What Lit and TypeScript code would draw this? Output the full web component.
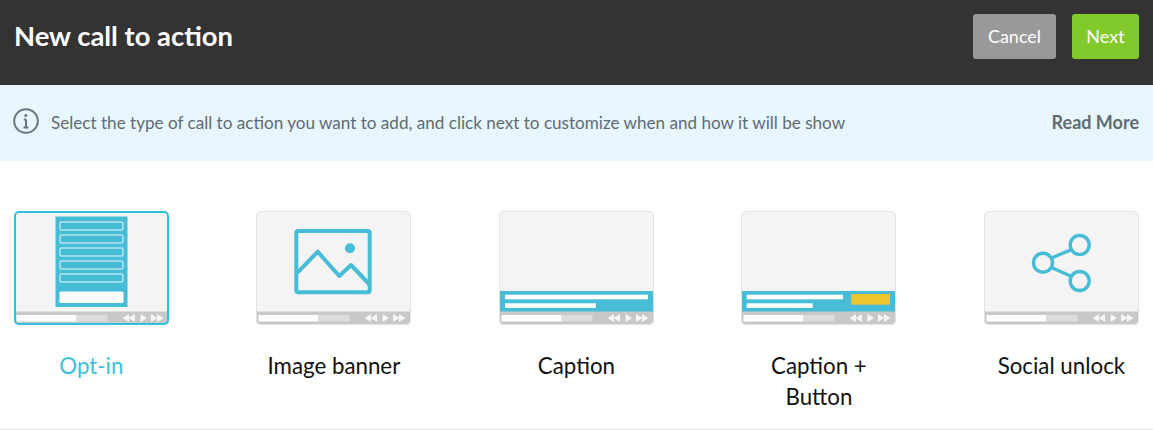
import { LitElement, html, css, svg } from 'lit';
import { customElement } from 'lit/decorators.js';
import { classMap } from 'lit/directives/class-map.js';

const BLUE = '#47bcd6';

const optinArt = svg`
  <rect x="41.5" y="5.5" width="72" height="90.5" fill="${BLUE}" />
  ${[11, 24, 37, 50, 63].map(
    (y) => svg`<rect x="46" y="${y}" width="63" height="8" rx="1.5" fill="none" stroke="#b5e5ef" stroke-width="1.5" />`
  )}
  <rect x="45.5" y="80.5" width="64" height="11.5" rx="1.5" fill="#fff" />
`;

const imageArt = svg`
  <g fill="none" stroke="${BLUE}" stroke-width="4" stroke-linejoin="round">
    <rect x="40.3" y="20" width="73.4" height="61.3" rx="2" />
    <path d="M41.5 61.7 61.7 40.7 83.3 65 95 54 114 74" />
  </g>
  <circle cx="94" cy="37.3" r="5" fill="${BLUE}" />
`;

const captionArt = svg`
  <rect x="0" y="80" width="155" height="21" fill="${BLUE}" />
  <rect x="6" y="83.7" width="143" height="4.6" fill="#fff" />
  <rect x="6" y="92.3" width="91" height="4.6" fill="#fff" />
`;

const captionButtonArt = svg`
  <rect x="0" y="80" width="155" height="21" fill="${BLUE}" />
  <rect x="5.7" y="83.7" width="96.3" height="4.6" fill="#fff" />
  <rect x="5.7" y="92.3" width="66" height="4.6" fill="#fff" />
  <rect x="110.3" y="83" width="38.7" height="10.7" fill="#efc42d" />
`;

const socialArt = svg`
  <g fill="none" stroke="${BLUE}" stroke-width="3.4">
    <path d="M67.5 47 87.5 38.5M67.5 56.5 87.5 65.5" />
    <circle cx="95.7" cy="34" r="9.5" />
    <circle cx="59" cy="51.7" r="9.5" />
    <circle cx="95.7" cy="70" r="9.5" />
  </g>
`;

const controls = svg`
  <rect x="0" y="100.5" width="155" height="13.5" fill="#c8c8c8" />
  <rect x="2.5" y="104" width="60" height="6.5" fill="#fff" />
  <rect x="62.5" y="104" width="31" height="6.5" fill="#dcdcdc" />
  <g fill="#f6f6f6">
    <path d="M115 103v8l-6.5-4zM121 103v8l-6.5-4z" />
    <path d="M126.5 103v8l6.5-4z" />
    <path d="M137 103v8l6.5-4zM143 103v8l6.5-4z" />
  </g>
`;

const TYPES = [
  { label: 'Opt-in', art: optinArt, selected: true },
  { label: 'Image banner', art: imageArt, selected: false },
  { label: 'Caption', art: captionArt, selected: false },
  { label: 'Caption + Button', art: captionButtonArt, selected: false },
  { label: 'Social unlock', art: socialArt, selected: false },
];

@customElement('app-root')
export class AppRoot extends LitElement {
  static styles = css`
    :host {
      display: block;
      height: 430px;
      overflow: hidden;
      background: #fff;
      font-family: 'Lato', 'Liberation Sans', sans-serif;
    }

    .header {
      height: 85px;
      box-sizing: border-box;
      padding: 14px 14px 0;
      display: flex;
      justify-content: space-between;
      align-items: flex-start;
      background: #333;
    }

    .title {
      margin: 0;
      color: #fff;
      font-size: 27.4px;
      font-weight: 700;
      line-height: 44px;
    }

    .actions {
      display: flex;
      gap: 16px;
    }

    .btn {
      height: 45px;
      padding: 0 0 2px;
      border: none;
      border-radius: 3px;
      color: #fff;
      font: inherit;
      font-size: 18px;
    }

    .cancel {
      width: 83px;
      background: #999;
    }

    .next {
      width: 67px;
      background: #82c92b;
    }

    .info {
      height: 76px;
      box-sizing: border-box;
      padding: 0 14px 2px 13px;
      display: flex;
      align-items: center;
      background: #e8f6fd;
      color: #5f6b75;
      font-size: 17.1px;
    }

    .info svg {
      display: block;
      margin: 0 12px 2px 0;
    }

    .info span {
      flex: 1;
    }

    .more {
      font-size: 18px;
      font-weight: 700;
    }

    .types {
      height: 269px;
      box-sizing: border-box;
      padding: 50px 0 0 13.9px;
      display: flex;
      gap: 87.5px;
      border-bottom: 1px solid #e4e4e4;
    }

    .type {
      width: 155px;
      text-align: center;
      color: #111;
      font-size: 22.3px;
      line-height: 31px;
    }

    .thumb {
      height: 114px;
      margin-bottom: 25px;
      border-radius: 5px;
      overflow: hidden;
      background: #f4f4f4;
      outline: 1px solid #dfe3e3;
      outline-offset: -1px;
    }

    .thumb svg {
      display: block;
    }

    .selected {
      color: #3bbfdd;
    }

    .selected .thumb {
      outline: 2px solid #2fbfe0;
      outline-offset: -2px;
    }
  `;

  render() {
    return html`
      <div class="header">
        <h1 class="title">New call to action</h1>
        <div class="actions">
          <button class="btn cancel">Cancel</button>
          <button class="btn next">Next</button>
        </div>
      </div>
      <div class="info">
        <svg width="26" height="26" viewBox="0 0 26 26" fill="none" stroke="#68747e">
          <circle cx="13" cy="13" r="11.8" stroke-width="2" />
          <path d="M13 11.5v7.5M10.5 19.5h5M10.8 11.5H13" stroke-width="2" />
          <circle cx="12.8" cy="7.5" r="1.5" fill="#68747e" stroke="none" />
        </svg>
        <span>Select the type of call to action you want to add, and click next to customize when and how it will be show</span>
        <b class="more">Read More</b>
      </div>
      <div class="types">
        ${TYPES.map(
          (t) => html`
            <div class=${classMap({ type: true, selected: t.selected })}>
              <div class="thumb">
                <svg width="155" height="114" viewBox="0 0 155 114">${t.art}${controls}</svg>
              </div>
              ${t.label}
            </div>
          `
        )}
      </div>
    `;
  }
}
